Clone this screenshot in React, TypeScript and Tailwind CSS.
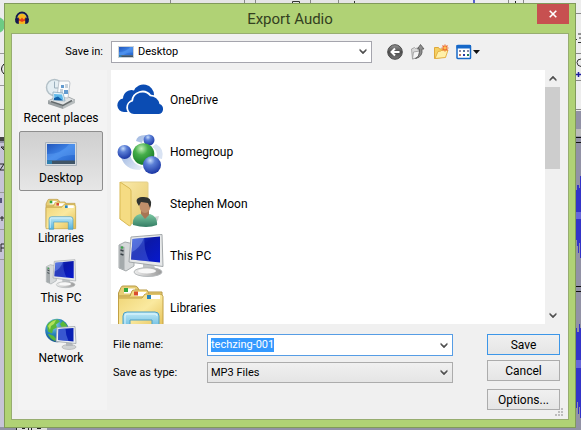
import React, { useEffect, useRef } from "react";

type IconProps = { className?: string };

function Chevron({ className = "" }: IconProps) {
  return (
    <svg viewBox="0 0 8 7" className={`h-[7px] w-2 ${className}`}>
      <path d="M0.8 1.2v1.5L4 6l3.2-3.3V1.2L4 4z" fill="#505050" stroke="#505050" strokeWidth=".5" />
    </svg>
  );
}

function AudacityIcon() {
  return (
    <svg viewBox="0 0 16 16" className="h-4 w-4">
      <path d="M4 6.5Q8 1 12 6.5V13q-4 2-8 0z" fill="#f6b51c" />
      <path d="M4 9.5l1.5-1 1 1 1.5-2 1.5 2 1-1 1.5 1v1l-2 .5-2 1-2-1-2-.5z" fill="#e33b1c" />
      <path d="M2.5 10V8a5.5 5.5 0 0 1 11 0v2" fill="none" stroke="#15184f" strokeWidth="1.8" />
      <path d="M1 8.5h1.6l2.2-1v6.5L2.5 13.5Q.8 12 1 8.5zM15 8.5h-1.6l-2.2-1v6.5l2.3-.5Q15.2 12 15 8.5z" fill="#15184f" />
    </svg>
  );
}

function BackIcon() {
  return (
    <svg viewBox="0 0 16 16" className="h-4 w-4">
      <defs>
        <linearGradient id="back" x2="0" y2="1">
          <stop stopColor="#999" />
          <stop offset=".5" stopColor="#4c4c4c" />
          <stop offset="1" stopColor="#777" />
        </linearGradient>
      </defs>
      <circle cx="8" cy="8" r="7.3" fill="url(#back)" stroke="#4b4b4b" />
      <path d="M12.5 8H5M8 4.5L4.5 8 8 11.5" fill="none" stroke="#fff" strokeWidth="2" />
    </svg>
  );
}

function UpIcon() {
  return (
    <svg viewBox="0 0 16 16" className="h-4 w-4">
      <path d="M1.5 5l3-1.5 1 1L9 3.5V13l-6.5 2z" fill="#d9d9d9" stroke="#999" strokeWidth=".8" />
      <path d="M3.5 8l6-1-1 6-6 2z" fill="#f4f4f4" stroke="#999" strokeWidth=".8" />
      <path d="M5.5 14.5q4.5-2 4-9.500H7.5l3-4.500L14 5h-2q1 8-6.500 9.500z" fill="#8d8d8d" stroke="#555" strokeWidth=".8" />
    </svg>
  );
}

function NewFolderIcon() {
  return (
    <svg viewBox="0 0 16 16" className="h-4 w-4">
      <path d="M1.5 14.5v-11h4l1 1.5h6v8z" fill="#f5d062" stroke="#dfa83a" />
      <path d="M2 14.5L5 7.5l3-.5 1-1h6l-2.5 7.5z" fill="#fff0a8" stroke="#e2ad3f" strokeWidth=".9" />
      <path d="M12 .5v7M8.5 4h7M9.5 1.5l5 5M14.5 1.5l-5 5" stroke="#ee6b2d" strokeWidth="1.2" />
      <circle cx="12" cy="4" r="1.4" fill="#ffc14e" />
    </svg>
  );
}

function ViewIcon() {
  return (
    <svg viewBox="0 0 24 16" className="h-4 w-6">
      <rect x="1" y="1.5" width="13.5" height="13" rx=".8" fill="#fff" stroke="#1668c8" strokeWidth="1.5" />
      <path d="M.5 1H15v3.5H.5z" fill="#1668c8" />
      <path d="M3 6h2v2H3zM11 6h2v2h-2z" fill="#8c8aa6" />
      <path d="M7 6h2v2H7z" fill="#53789c" />
      <path d="M11 10h2v2h-2z" fill="#257c55" />
      <path d="M3 10h2v2H3z" fill="#bd7a63" />
      <path d="M7 10h2v2H7z" fill="#253aa8" />
      <path d="M17 6h7l-3.5 4z" fill="#111" />
    </svg>
  );
}

function DesktopIcon({ className = "" }: IconProps) {
  return (
    <svg viewBox="0 0 32 24" className={className}>
      <defs>
        <linearGradient id="desk" x2="1" y2="1">
          <stop stopColor="#2256bb" />
          <stop offset=".5" stopColor="#3d83e6" />
          <stop offset="1" stopColor="#2866cc" />
        </linearGradient>
      </defs>
      <path d="M.5.5h31v23H.5z" fill="#d5dbe1" stroke="#aab3bc" />
      <path d="M2 2h28v17H2z" fill="url(#desk)" />
      <path d="M2 12Q17 12 24 2h6v11Q18 12 10 19H2z" fill="#74b3ff" opacity=".3" />
      <path d="M2 18.5h28V22H2z" fill="#405567" />
      <path d="M2 18.5h5V22H2z" fill="#2e80b0" />
    </svg>
  );
}

function RecentIcon({ className = "" }: IconProps) {
  return (
    <svg viewBox="0 0 32 32" className={className}>
      <path d="M3 23l14-7 13 6-12 7z" fill="#dfe2e3" stroke="#a8adaf" />
      <path d="M3 23l15 5v3L3 26z" fill="#9aa0a2" />
      <path d="M18 28l12-6v3l-12 6z" fill="#b9bebf" />
      <circle cx="9.5" cy="9.5" r="8" fill="#e4eef3" stroke="#b4c1c8" strokeWidth="1.5" />
      <path d="M9.5 3.5V10h5" fill="none" stroke="#9aafbc" />
      <path d="M14 3h10l1 2-2 15-11-1z" fill="#fafcfd" stroke="#b0b9c2" strokeWidth=".8" />
      <path d="M16 7h3v3h-3zM19 12h4v4h-4z" fill="#629bd0" />
      <path d="M20 7h3M20 9h3M15 12h3M15 14h3" stroke="#93a7b8" />
      <path d="M8 14l10 1 2 8-12-1z" fill="#e8f5fd" stroke="#8aabbe" strokeWidth=".8" />
      <path d="M9 16l8 .5 1.5 5.5-9-1z" fill="#5fb9ea" />
      <path d="M9 20l4-1.5 5 4-9-.5z" fill="#115fa7" />
      <path d="M6 23.5l12 4 9-5" fill="none" stroke="#636a6c" strokeWidth="1.5" />
    </svg>
  );
}

function LibrariesIcon({ className = "" }: IconProps) {
  return (
    <svg viewBox="0 0 48 48" className={className}>
      <defs>
        <linearGradient id="lib" x2="1" y2="1">
          <stop stopColor="#efd576" />
          <stop offset=".5" stopColor="#fae99f" />
          <stop offset="1" stopColor="#e3bd50" />
        </linearGradient>
        <linearGradient id="libstand" x2="0" y2="1">
          <stop stopColor="#c1e9f5" />
          <stop offset="1" stopColor="#53b1dd" />
        </linearGradient>
      </defs>
      <path d="M1.5 44V9L4 3.5q.5-1.5 2-1.5h12q2 0 3 2l2 4h22v36z" fill="#e7ce76" stroke="#b99a45" />
      <path d="M7 4.5h11v5H7z" fill="#fff" />
      <path d="M7 4h4v4H7z" fill="#32a53b" />
      <path d="M2 12h11l2-5q.5-1 2-1h13l3 6h12" fill="#f4dc86" stroke="#b99a45" />
      <path d="M17 8h12v4H17z" fill="#fff" />
      <path d="M17 7.5h4v4h-4z" fill="#d94d2c" />
      <path d="M1.5 46V14H25l3-4h15q2 0 3 2.5V46z" fill="url(#lib)" stroke="#c2a144" />
      <path d="M30 11h13v4H30z" fill="#fff" />
      <path d="M30 11h4v4h-4z" fill="#2985ba" />
      <path d="M6 47V32q0-4 4-4h28q4 0 4 4v15h-7V36H13v11z" fill="url(#libstand)" stroke="#4c9fc5" />
      <path d="M8 45V32q0-2 2-2h28q2 0 2 2" fill="none" stroke="#e1f8ff" />
    </svg>
  );
}

function ComputerIcon({ className = "" }: IconProps) {
  return (
    <svg viewBox="0 0 48 48" className={className}>
      <defs>
        <linearGradient id="pc" x2="1" y2="1">
          <stop stopColor="#1b42cf" />
          <stop offset=".4" stopColor="#0b18a8" />
          <stop offset="1" stopColor="#0719ce" />
        </linearGradient>
        <linearGradient id="pcbase" x2="1">
          <stop stopColor="#eee" />
          <stop offset="1" stopColor="#999" />
        </linearGradient>
      </defs>
      <path d="M2 13l6-3 9 2v22l-8 5-7-3z" fill="#d6d9da" stroke="#a5aaac" />
      <path d="M2.5 13l5 2v23l-5-2z" fill="#a4aaac" />
      <path d="M3.5 18l3 1M3.5 22l3 1" stroke="#394247" strokeWidth="1.5" />
      <circle cx="5" cy="15.5" r="1.2" fill="#3ca64b" />
      <path d="M26 31l11 2 2 7H26z" fill="#bfc3c5" />
      <ellipse cx="31" cy="40" rx="14" ry="4.5" fill="url(#pcbase)" stroke="#b4b8ba" />
      <ellipse cx="30" cy="39" rx="9" ry="2.5" fill="#f8f8f8" />
      <path d="M14 5l31-2.5 1 32L12 30z" fill="#e6e8e9" stroke="#a3a8ab" />
      <path d="M15.5 7L43 4.5v26L14 27.5z" fill="url(#pc)" />
      <path d="M15.5 7l12-1q-1 12 5 23.500L14 27.5z" fill="#6f91ed" opacity=".3" />
      <path d="M15.5 7L27 6q-4 10-12 14z" fill="#9ab6ff" opacity=".35" />
    </svg>
  );
}

function NetworkIcon({ className = "" }: IconProps) {
  return (
    <svg viewBox="0 0 32 32" className={className}>
      <defs>
        <radialGradient id="globe" cx=".35" cy=".25" r=".8">
          <stop stopColor="#9bdaf2" />
          <stop offset=".5" stopColor="#2883bd" />
          <stop offset="1" stopColor="#124c85" />
        </radialGradient>
      </defs>
      <circle cx="12" cy="12.5" r="11.8" fill="url(#globe)" />
      <path d="M2 7Q6 1 13 1.5l2 2-4 3 1 3-4 2-1 4-4-2zM18 3l4 4-1 4-4-1-2-4zM4 16l5 2 2 3-1 2q-5-2-7-7z" fill="#5ab839" />
      <path d="M3 8q3-5 8-6l-2 4-3 2-1 4z" fill="#b2e15a" />
      <ellipse cx="24" cy="29" rx="7" ry="2.5" fill="#d0d3d4" stroke="#aaa" strokeWidth=".6" />
      <path d="M21 24h6l1 4h-7z" fill="#b5b9bc" />
      <path d="M12 9.5L30 8.5l1 17-20-2z" fill="#edf0f2" stroke="#9da5ab" strokeWidth=".8" />
      <path d="M13.5 11l15-1v13.5L13 22z" fill="#0920b4" />
      <path d="M13.5 11l7-.5q0 6 3 12.5L13 22z" fill="#587de2" opacity=".6" />
    </svg>
  );
}

function OneDriveIcon({ className = "" }: IconProps) {
  return (
    <svg viewBox="0 0 48 48" className={className}>
      <path d="M7 36a6.8 6.8 0 0 1-1-13.5 8.5 8.5 0 0 1 11-8A10.5 10.5 0 0 1 37 19v17z" fill="#0b4cb3" />
      <path d="M17 38a6.5 6.5 0 0 1-1-12.8 9.5 9.5 0 0 1 17-5 9.5 9.5 0 0 1 9.5 7.8 5.2 5.2 0 0 1-.5 10z" fill="#0b4cb3" stroke="#fff" strokeWidth="3.5" />
      <path d="M17 38a6.5 6.5 0 0 1-1-12.8 9.5 9.5 0 0 1 17-5 9.5 9.5 0 0 1 9.5 7.8 5.2 5.2 0 0 1-.5 10z" fill="#0b4cb3" />
    </svg>
  );
}

function HomegroupIcon({ className = "" }: IconProps) {
  return (
    <svg viewBox="0 0 48 48" className={className}>
      <defs>
        <radialGradient id="hgblue" cx=".4" cy=".25" r=".75">
          <stop stopColor="#c6dcfa" />
          <stop offset=".35" stopColor="#5b7fd6" />
          <stop offset="1" stopColor="#1a36a4" />
        </radialGradient>
        <radialGradient id="hggreen" cx=".4" cy=".25" r=".75">
          <stop stopColor="#c2f0b7" />
          <stop offset=".4" stopColor="#45ae4a" />
          <stop offset="1" stopColor="#177a28" />
        </radialGradient>
        <linearGradient id="hgtrail" x2="1" y2="1">
          <stop stopColor="#7d9ed6" />
          <stop offset="1" stopColor="#fff" />
        </linearGradient>
      </defs>
      <path d="M4 29q4 13 19 13l3-3Q15 36 13 27zM19 13q1-7 12-6l3 3q-8-1-9 5z" fill="url(#hgtrail)" />
      <path d="M39 16q9 5 6 15l-5-1q1-8-5-11z" fill="#d9e3f3" />
      <circle cx="32" cy="12" r="5.5" fill="url(#hgblue)" />
      <circle cx="7.5" cy="24" r="7" fill="url(#hgblue)" />
      <circle cx="26.5" cy="26" r="10.8" fill="url(#hggreen)" />
      <circle cx="35" cy="37" r="9" fill="url(#hgblue)" />
    </svg>
  );
}

function UserFolderIcon({ className = "" }: IconProps) {
  return (
    <svg viewBox="0 0 48 48" className={className}>
      <defs>
        <linearGradient id="uf" x2="1" y2="1">
          <stop stopColor="#faeaa9" />
          <stop offset="1" stopColor="#e6c96e" />
        </linearGradient>
        <linearGradient id="shirt" x2="0" y2="1">
          <stop stopColor="#7cc8a2" />
          <stop offset="1" stopColor="#347d64" />
        </linearGradient>
      </defs>
      <path d="M4 2h26q1 0 1 1v37l-18 4L3 39z" fill="url(#uf)" stroke="#e3d08c" />
      <path d="M3 2l9 6q2 1 2 3v33q0 3-3 1l-8-6z" fill="#f5dc83" stroke="#d9b953" />
      <path d="M36 37l6-1q-1 8-9 10z" fill="#aaa" opacity=".5" />
      <path d="M16 45q-1-9 7-11l5 1 5-1q8 3 7 11-10 4-24 0z" fill="url(#shirt)" />
      <path d="M24 30h8v5l-4 4-4-5z" fill="#a77654" />
      <ellipse cx="28" cy="26" rx="5.5" ry="7" fill="#bf8f6b" />
      <path d="M22 26q-6-8 3-9 10-1 9 8l-1 3-2-5-7-1z" fill="#303331" />
    </svg>
  );
}

const places = [
  { name: "Recent places", icon: <RecentIcon className="h-8 w-8" /> },
  { name: "Desktop", icon: <DesktopIcon className="my-1 h-6 w-8" />, active: true },
  { name: "Libraries", icon: <LibrariesIcon className="h-8 w-8" /> },
  { name: "This PC", icon: <ComputerIcon className="h-8 w-8" /> },
  { name: "Network", icon: <NetworkIcon className="h-8 w-8" /> },
];

const items = [
  { name: "OneDrive", icon: <OneDriveIcon className="h-12 w-12" /> },
  { name: "Homegroup", icon: <HomegroupIcon className="h-12 w-12" /> },
  { name: "Stephen Moon", icon: <UserFolderIcon className="h-12 w-12" /> },
  { name: "This PC", icon: <ComputerIcon className="h-12 w-12" /> },
  { name: "Libraries", icon: <LibrariesIcon className="h-12 w-12" /> },
];

// The audio editor that shows round the edges of the dialog
function EditorBehind() {
  return (
    <div className="absolute inset-0 flex justify-between overflow-hidden bg-[#9292a6]">
      <svg viewBox="0 0 50 430" className="h-[430px] w-[50px]">
        <path d="M0 0h50v137H0z" fill="#ececec" />
        <path d="M0 143h50v284H0z" fill="#c7c4d8" />
        <circle cx="-3" cy="25" r="8" fill="#6ccb84" />
        <path d="M0 53.5h5M0 85.5h5M0 109.5h5M0 192.5h5M0 229.5h5M0 259.5h5" stroke="#999" />
        <path d="M4 64q-5 5 0 10" fill="none" stroke="#111" />
        <path d="M0 137h5v4H0z" fill="#444" />
        <path d="M1 147h3v3zM0 164h4l-4 6h4M0 218h4M2 216v5M1 252v-8h3M1 248h3" fill="none" stroke="#222" />
        <path d="M0 198h2v5H0z" fill="#55557c" />
        <path d="M16 427h31v3H16z" fill="#dedede" />
        <path d="M16.5 427v3M22 428.5h3M28.5 427v3M31.5 427v3M37 428.5h4" stroke="#222" />
      </svg>
      <svg viewBox="0 0 350 4" preserveAspectRatio="none" className="h-1 flex-1">
        <path d="M0 0h350v4H0z" fill="#e5e5e5" />
        <path d="M120.5 0v4M194.5 0v4M205.5 0v4M260.5 0v4M288.5 0v4" stroke="#888" />
        <path d="M242.5 4V1.5h7V4M304.5 1v3" fill="none" stroke="#333" />
      </svg>
      <svg viewBox="0 0 181 430" className="h-[430px] w-[181px]">
        <path d="M0 0h181v4H0zM170 0h11v111h-11z" fill="#ededed" />
        <path d="M74 0v4" stroke="#5660ce" strokeWidth="2" />
        <path d="M108.5 0v4M123.5 0v4" stroke="#888" />
        <path d="M115.5 1v3" stroke="#222" />
        <path d="M176 13.5h5M176 53.5h5M176 80.5h5M176 109.5h5" stroke="#888" />
        <path d="M175 39.5h2M178 34h3M179 38h2M178 42.5h3M181 59q-4 0-4 3.500t4 4" fill="none" stroke="#333" />
        <path d="M176 74.5h5M178.5 72v5" stroke="#1f1fa0" strokeWidth="1.5" />
        <path d="M176 129h5v7h-5z" fill="#bbb" />
        <path d="M176 137.5h5M176 142.5h5M176 286.5h5M176 291.5h5" stroke="#111" />
        <path d="M175 186h1v4h1v-5h2v3h1v-12h1v82h-1v-15h-1v10h-1v-7h-1v-6h-2z" fill="#3434c8" />
        <path d="M175 331h1v-3h1v4h2v-8h1v4h1v90h-1v-11h-1v7h-1v-12h-1v6h-2z" fill="#3434c8" />
        <path d="M175 212h6v7h-6zM175 360h6v8h-6z" fill="#6868db" />
      </svg>
    </div>
  );
}

const button =
  "h-[21px] w-full border bg-linear-to-b from-[#f0f0f0] to-[#e5e5e5] text-center text-[12px] leading-[18px]";

export default function App() {
  const fileName = useRef<HTMLInputElement>(null);

  useEffect(() => {
    fileName.current?.focus();
    fileName.current?.select();
  }, []);

  return (
    <main className="relative min-h-screen overflow-hidden py-[3px] pr-[5px] pl-1 font-[Roboto,'Noto_Sans',sans-serif] text-[12px] leading-4 text-black">
      <EditorBehind />
      <section
        role="dialog"
        aria-labelledby="title"
        className="relative border border-[#819a5a] bg-[#b0d275] px-1.5 pb-[7px]"
      >
        <header className="flex h-[29px] items-start">
          <div className="flex w-8 pt-1.5 pl-[3px]">
            <AudacityIcon />
          </div>
          <h1 id="title" className="flex-1 pt-[5px] text-center text-[15px] leading-5 text-[#33401f]">
            Export Audio
          </h1>
          <button aria-label="Close" className="flex h-5 w-8 items-center justify-center bg-[#c75050]">
            <svg viewBox="0 0 8 8" className="h-2 w-2">
              <path d="M.7.7l6.6 6.6M7.3.7L.7 7.3" stroke="#fff" strokeWidth="1.6" />
            </svg>
          </button>
        </header>

        <div className="border border-[#97ad70] bg-[#f0f0f0] pt-[7px] pr-2 pb-[9px] pl-1.5">
          <div className="flex h-[21px] items-center">
            <label htmlFor="folder" className="w-[93px] pr-2 text-right text-[11px]">
              Save in:
            </label>
            <div className="flex h-[22px] w-[261px] items-center border border-[#a5a5ad] bg-white pr-1 pl-1.5">
              <DesktopIcon className="h-3 w-4" />
              <select id="folder" className="min-w-0 flex-1 appearance-none pl-1 text-[11px] outline-none">
                <option>Desktop</option>
              </select>
              <Chevron className="pointer-events-none" />
            </div>
            <div className="flex items-center gap-[7px] pl-[15px]">
              <button aria-label="Back"><BackIcon /></button>
              <button aria-label="Up one level"><UpIcon /></button>
              <button aria-label="New folder"><NewFolderIcon /></button>
              <button aria-label="View"><ViewIcon /></button>
            </div>
          </div>

          <div className="flex gap-1 pt-2">
            <nav className="w-[89px] shrink-0 bg-[#f3f3f3] pt-px pr-1 pl-px">
              {places.map((place) => (
                <button
                  key={place.name}
                  className={`flex h-[60px] w-full flex-col items-center border pt-1.5 leading-4 whitespace-nowrap ${
                    place.active
                      ? "rounded-[2px] border-[#8e8e8e] bg-linear-to-b from-[#cfcfcf] to-[#e6e6e6]"
                      : "border-transparent"
                  }`}
                >
                  {place.icon}
                  {place.name}
                </button>
              ))}
            </nav>

            <div className="min-w-0 flex-1">
              <div className="flex h-[254px]">
                <ul className="flex-1 overflow-hidden bg-white pt-1 pl-1.5">
                  {items.map((item) => (
                    <li key={item.name} className="flex h-[52px] items-center gap-[5px]">
                      {item.icon}
                      {item.name}
                    </li>
                  ))}
                </ul>
                <div className="flex w-[15px] flex-col items-center justify-between">
                  <div className="flex w-full flex-col items-center">
                    <button aria-label="Scroll up" className="flex h-[17px] items-center">
                      <Chevron className="rotate-180" />
                    </button>
                    <div className="h-[82px] w-full bg-[#cdcdcd]"></div>
                  </div>
                  <button aria-label="Scroll down" className="flex h-[17px] items-center">
                    <Chevron />
                  </button>
                </div>
              </div>

              <div className="flex items-start pt-2.5 pl-0.5 text-[11px]">
                <div className="grid grid-cols-[94px_246px] items-center gap-y-1.5">
                  <label htmlFor="name">File name:</label>
                  <div className="flex h-[22px] items-center border border-[#569de5] bg-white pr-1 pl-[3px]">
                    <input
                      id="name"
                      ref={fileName}
                      defaultValue="techzing-001"
                      className="min-w-0 flex-1 leading-[14px] outline-none selection:bg-[#3399ff] selection:text-white"
                    />
                    <Chevron />
                  </div>
                  <label htmlFor="type">Save as type:</label>
                  <div className="flex h-[21px] items-center border border-[#acacac] bg-linear-to-b from-[#f0f0f0] to-[#e5e5e5] pr-1 pl-[3px]">
                    <select id="type" className="min-w-0 flex-1 appearance-none outline-none">
                      <option>MP3 Files</option>
                    </select>
                    <Chevron className="pointer-events-none" />
                  </div>
                </div>
                <div className="ml-auto flex w-[73px] flex-col gap-[5px]">
                  <button className={`${button} border-[#3c96e8]`}>Save</button>
                  <button className={`${button} border-[#acacac]`}>Cancel</button>
                  <button className={`${button} mt-[3px] border-[#acacac]`}>Options...</button>
                </div>
              </div>
            </div>
          </div>
          <svg viewBox="0 0 9 9" className="absolute right-[11px] bottom-2.5 h-[9px] w-[9px]">
            <path
              d="M6 0h2v2H6zM3 3h2v2H3zM6 3h2v2H6zM0 6h2v2H0zM3 6h2v2H3zM6 6h2v2H6z"
              fill="#bdbdbd"
            />
          </svg>
        </div>
      </section>
    </main>
  );
}
